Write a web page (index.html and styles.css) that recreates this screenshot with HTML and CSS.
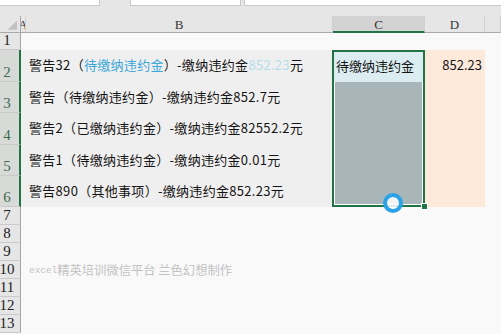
FILE: index.html
```html
<!DOCTYPE html>
<html>
<head>
<meta charset="utf-8">
<link rel="stylesheet" href="styles.css">
</head>
<body>
<div class="app">
  <div class="topbar">
    <div class="box b1"></div>
    <div class="box b2"></div>
    <div class="box b3"></div>
  </div>
  <div class="sheet">
    <div class="hd corner"><svg width="21" height="17" viewBox="0 0 21 17"><polygon points="18,4 18,14 8,14" fill="#c2c2c2"/></svg></div>
    <div class="hd">A</div>
    <div class="hd">B</div>
    <div class="hd sel">C</div>
    <div class="hd">D</div>
    <div class="hd"></div>

    <div class="rh">1</div><div class="c"></div><div class="c"></div><div class="c"></div><div class="c"></div><div class="c"></div>

    <div class="rh sel">2</div><div class="c fill"></div>
    <div class="c fill txt">警告32（<span class="blue">待缴纳违约金</span>）-缴纳违约金<span class="pale">852.23</span>元</div>
    <div class="selcol">
      <div class="active">待缴纳违约金</div>
      <div class="shade"></div>
      <div class="handle"></div>
    </div>
    <div class="c peach num">852.23</div><div class="c"></div>

    <div class="rh sel">3</div><div class="c fill"></div>
    <div class="c fill txt">警告（待缴纳违约金）-缴纳违约金852.7元</div>
    <div class="c peach"></div><div class="c"></div>

    <div class="rh sel">4</div><div class="c fill"></div>
    <div class="c fill txt">警告2（已缴纳违约金）-缴纳违约金82552.2元</div>
    <div class="c peach"></div><div class="c"></div>

    <div class="rh sel">5</div><div class="c fill"></div>
    <div class="c fill txt">警告1（待缴纳违约金）-缴纳违约金0.01元</div>
    <div class="c peach"></div><div class="c"></div>

    <div class="rh sel">6</div><div class="c fill"></div>
    <div class="c fill txt">警告890（其他事项）-缴纳违约金852.23元</div>
    <div class="c peach"></div><div class="c"></div>

    <div class="rh">7</div><div class="c"></div><div class="c"></div><div class="c"></div><div class="c"></div><div class="c"></div>
    <div class="rh">8</div><div class="c"></div><div class="c"></div><div class="c"></div><div class="c"></div><div class="c"></div>
    <div class="rh">9</div><div class="c"></div><div class="c"></div><div class="c"></div><div class="c"></div><div class="c"></div>
    <div class="rh">10</div><div class="c"></div>
    <div class="c mark"><span class="mono">excel</span>精英培训微信平台 兰色幻想制作</div>
    <div class="c"></div><div class="c"></div><div class="c"></div>
    <div class="rh">11</div><div class="c"></div><div class="c"></div><div class="c"></div><div class="c"></div><div class="c"></div>
    <div class="rh">12</div><div class="c"></div><div class="c"></div><div class="c"></div><div class="c"></div><div class="c"></div>
    <div class="rh">13</div><div class="c"></div><div class="c"></div><div class="c"></div><div class="c"></div><div class="c"></div>
  </div>
  <div class="ring"></div>
</div>
</body>
</html>
```

FILE: styles.css
```css
* { box-sizing: border-box; }
html, body { margin: 0; padding: 0; background: #f9f9f9; }
.app {
  position: relative;
  width: 501px;
  height: 334px;
  overflow: hidden;
  background: #f9f9f9;
}
.topbar {
  height: 16px;
  background: #e6e6e6;
  display: flex;
  align-items: flex-start;
}
.box {
  height: 6px;
  background: #fff;
  border: 1px solid #c8c8c8;
  border-top: none;
}
.b1 { width: 100px; border-left: none; }
.b2 { width: 111px; margin-left: 30px; }
.b3 { flex: 1; margin-left: 3px; border-right: none; }

.sheet {
  display: grid;
  grid-template-columns: 21px 5px 307px 92px 60px 16px;
  grid-template-rows: 17px 17px 32px 31px 32px 31px 31px repeat(7, 18px);
}
.hd {
  background: #e6e6e6;
  border-bottom: 1px solid #a9a9a9;
  border-right: 1px solid #d0d0d0;
  font-family: "Liberation Serif", serif;
  font-size: 13px;
  color: #333;
  display: flex;
  align-items: center;
  justify-content: center;
  overflow: hidden;
  padding-top: 2px;
}
.hd.corner { border-right: 1px solid #a9a9a9; padding: 0; }
.hd.sel {
  background: #d3d3d3;
  border-bottom: 2px solid #217346;
}
.rh {
  background: #e6e6e6;
  border-right: 1px solid #a5a5a5;
  border-bottom: 1px solid #cacaca;
  font-family: "Liberation Serif", serif;
  font-size: 15px;
  line-height: 15px;
  color: #222;
  display: flex;
  align-items: flex-end;
  justify-content: center;
  padding-right: 6px;
  padding-bottom: 1px;
  white-space: nowrap;
}
.rh.sel {
  background: #d8dad8;
  color: #3d6b4e;
  border-right: 2px solid #217346;
  padding-right: 5px;
}
.c {
  display: flex;
  align-items: center;
  white-space: nowrap;
  font-family: "Noto Sans CJK SC", "Noto Sans", sans-serif;
  font-size: 13px;
  color: #141414;
}
.fill { background: #f0efef; }
.txt {
  padding-left: 3px;
  padding-bottom: 3px;
  letter-spacing: 0.3px;
}
.blue { color: #3aa7d8; }
.pale { color: #b4dcec; }
.selcol {
  grid-row: span 5;
  margin-left: -1px;
  border: 2px solid #217346;
  padding: 0 1px 1px 1px;
  background: #ffffff;
  display: flex;
  flex-direction: column;
  position: relative;
}
.active {
  height: 30px;
  flex: none;
  background: #dcedf2;
  display: flex;
  align-items: center;
  padding-left: 2px;
  padding-bottom: 3px;
  margin: 0 -1px;
  font-family: "Noto Sans CJK SC", "Noto Sans", sans-serif;
  font-size: 13px;
  color: #141414;
  white-space: nowrap;
}
.shade { flex: 1; background: #a8b6b9; }
.peach { background: #fde9da; }
.num {
  justify-content: flex-end;
  padding-right: 3px;
  padding-bottom: 3px;
}
.mark {
  color: #c2c2c2;
  font-size: 12.3px;
  padding-left: 3px;
}
.mono {
  font-family: "Liberation Mono", monospace;
  font-size: 9.4px;
}
.handle {
  position: absolute;
  right: -5px;
  bottom: -5px;
  width: 7px;
  height: 7px;
  background: #217346;
  border: 1px solid #fff;
}
.ring {
  position: absolute;
  left: 383px;
  top: 193px;
  width: 20px;
  height: 20px;
  border-radius: 50%;
  border: 4px solid #2ba2e6;
  background: rgba(255, 255, 255, 0.85);
}
```
